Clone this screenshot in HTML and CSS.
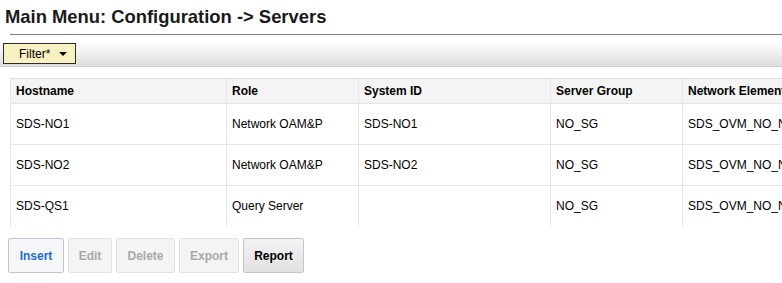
FILE: index.html
```html
<!DOCTYPE html>
<html>
<head>
    <title>Main Menu: Configuration -> Servers</title>
    <link rel="stylesheet" href="styles.css">
</head>
<body>
    <div class="page">
        <h1 class="page-title">Main Menu: Configuration -&gt; Servers</h1>
        <div class="title-rule"></div>

        <div class="filter-bar">
            <button class="filter-btn">Filter* <span class="caret"></span></button>
        </div>

        <div class="table-wrap">
            <table class="servers">
                <colgroup>
                    <col class="c-host">
                    <col class="c-role">
                    <col class="c-sysid">
                    <col class="c-sg">
                    <col class="c-ne">
                </colgroup>
                <thead>
                    <tr>
                        <th>Hostname</th>
                        <th>Role</th>
                        <th>System ID</th>
                        <th>Server Group</th>
                        <th>Network Element</th>
                    </tr>
                </thead>
                <tbody>
                    <tr>
                        <td>SDS-NO1</td>
                        <td>Network OAM&amp;P</td>
                        <td>SDS-NO1</td>
                        <td>NO_SG</td>
                        <td>SDS_OVM_NO_NE</td>
                    </tr>
                    <tr>
                        <td>SDS-NO2</td>
                        <td>Network OAM&amp;P</td>
                        <td>SDS-NO2</td>
                        <td>NO_SG</td>
                        <td>SDS_OVM_NO_NE</td>
                    </tr>
                    <tr class="last">
                        <td>SDS-QS1</td>
                        <td>Query Server</td>
                        <td></td>
                        <td>NO_SG</td>
                        <td>SDS_OVM_NO_NE</td>
                    </tr>
                </tbody>
            </table>
        </div>

        <div class="actions">
            <button class="btn btn-primary btn-insert">Insert</button>
            <button class="btn btn-edit" disabled>Edit</button>
            <button class="btn btn-delete" disabled>Delete</button>
            <button class="btn btn-export" disabled>Export</button>
            <button class="btn btn-report">Report</button>
        </div>
    </div>
</body>
</html>
```

FILE: styles.css
```css
body {
    margin: 0;
    font-family: "Liberation Sans", Arial, sans-serif;
    font-size: 12px;
    color: #000;
    background: #fff;
    overflow: hidden;
}

.page {
    width: 782px;
    overflow: hidden;
}

.page-title {
    margin: 0;
    padding: 6px 0 0 5px;
    font-size: 18.4px;
    font-weight: bold;
    line-height: 22px;
    color: #1a1a1a;
}

.title-rule {
    margin: 6px 0 0 10px;
    border-top: 1px solid #808080;
}

.filter-bar {
    margin-top: 7px;
    height: 25px;
    background: linear-gradient(#ffffff, #dedede);
    border-bottom: 1px solid #cfcfcf;
    padding: 1px 0 0 3px;
    box-sizing: border-box;
}

.filter-btn {
    display: flex;
    align-items: center;
    width: 73px;
    height: 21px;
    padding: 0 0 0 15px;
    border: 1px solid #2b2b2b;
    background: #f8f1c2;
    font-family: inherit;
    font-size: 12px;
    color: #000;
    gap: 9px;
}

.caret {
    width: 0;
    height: 0;
    border-left: 4px solid transparent;
    border-right: 4px solid transparent;
    border-top: 4px solid #000;
}

.table-wrap {
    margin: 11px 0 0 10px;
    width: 900px;
}

.servers {
    border-collapse: collapse;
    table-layout: fixed;
    width: 850px;
}

.c-host { width: 216px; }
.c-role { width: 132px; }
.c-sysid { width: 192px; }
.c-sg { width: 132px; }
.c-ne { width: 178px; }

.servers th,
.servers td {
    border: 1px solid #e6e6e6;
    text-align: left;
    padding: 0 5px;
    white-space: nowrap;
    overflow: hidden;
}

.servers th {
    height: 24px;
    background: #f4f4f4;
    font-weight: bold;
    border-top-color: #dcdcdc;
}

.servers td {
    height: 40px;
}

.servers tr.last td {
    border-bottom: none;
}

.actions {
    display: flex;
    gap: 4px;
    margin: 12px 0 0 8px;
}

.btn {
    height: 35px;
    padding: 0;
    border: 1px solid #e2e2e2;
    border-radius: 2px;
    background: #f4f4f4;
    font-family: inherit;
    font-size: 12px;
    font-weight: bold;
    color: #a9a9a9;
    text-align: center;
}

.btn-insert { width: 56px; }
.btn-edit { width: 44px; }
.btn-delete { width: 59px; }
.btn-export { width: 60px; }
.btn-report { width: 61px; }

.btn-primary {
    border-color: #bcc7d3;
    background: #f6f7f9;
    color: #1a6ed0;
}

.btn-report {
    border-color: #c3c6ca;
    background: linear-gradient(#f3f3f3, #e1e1e1);
    color: #000;
}
```
